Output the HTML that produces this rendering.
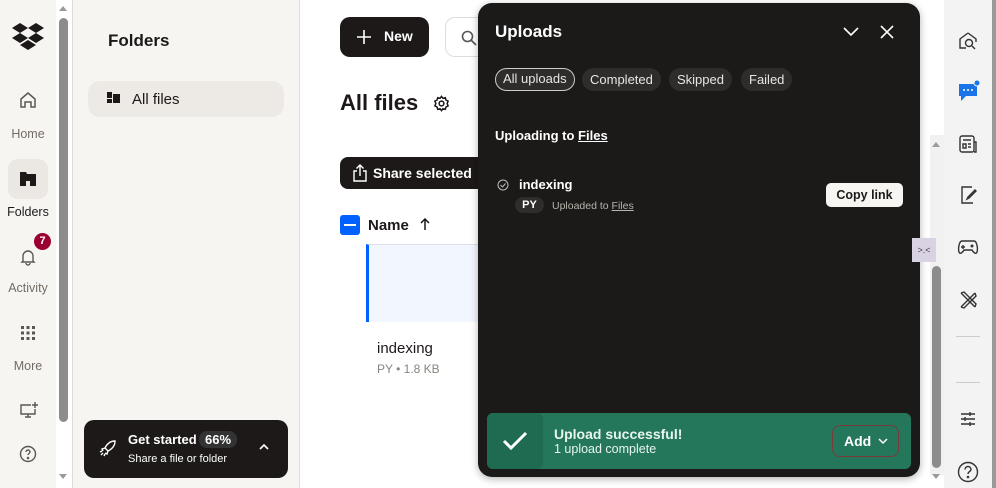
<!DOCTYPE html>
<html><head><meta charset="utf-8"><style>
*{box-sizing:border-box;margin:0;padding:0}
body{width:996px;height:488px;overflow:hidden;background:#fff;font-family:"Liberation Sans",sans-serif;position:relative;color:#1e1919}
.abs{position:absolute}
.rail{left:0;top:0;width:56px;height:488px;background:#f7f5f2}
.rl{font-size:12.5px;color:#736c64;width:56px;text-align:center}
.side{left:72px;top:0;width:228px;height:488px;background:#f7f5f2;border-left:1px solid #e0ddd8;border-right:1px solid #e0ddd8}
.pill{border-radius:12px;background:#2e2d2c;color:#e8e6e3;font-size:13px;height:23px;line-height:23px;padding:0 8px;top:68px}
</style></head><body>
<div class="abs rail"></div>
<svg class="abs" style="left:12px;top:23px" width="32" height="28" viewBox="0 0 32 28"><path d="M8 0L0 5l8 5 8-5zM24 0l-8 5 8 5 8-5zM0 15l8 5 8-5-8-5zM24 10l-8 5 8 5 8-5zM8 22l8 5 8-5-8-5z" fill="#1e1919"/></svg>
<svg class="abs" style="left:19px;top:91px" width="18" height="18" viewBox="0 0 18 18" fill="none" stroke="#5c5650" stroke-width="1.5"><path d="M2 8L9 2l7 6v8h-4v-5H6v5H2z"/></svg>
<div class="abs rl" style="top:127px">Home</div>
<div class="abs" style="left:8px;top:159px;width:40px;height:40px;border-radius:10px;background:#ebe8e3"></div>
<svg class="abs" style="left:19px;top:171px" width="18" height="16" viewBox="0 0 18 16"><path d="M1 1h6l1 2h9v12H1z" fill="#1e1919"/><rect x="7" y="10" width="4" height="5" fill="#ebe8e3"/></svg>
<div class="abs rl" style="top:205px;color:#1e1919">Folders</div>
<svg class="abs" style="left:19px;top:248px" width="18" height="18" viewBox="0 0 18 18" fill="none" stroke="#5c5650" stroke-width="1.4"><path d="M4 13V8a5 5 0 0110 0v5l1 1H3zM7 15a2 2 0 004 0"/></svg>
<div class="abs" style="left:34px;top:233px;width:17px;height:17px;border-radius:50%;background:#9b0032;color:#fff;font-size:11px;font-weight:bold;text-align:center;line-height:17px">7</div>
<div class="abs rl" style="top:281px">Activity</div>
<svg class="abs" style="left:20px;top:325px" width="16" height="16" viewBox="0 0 16 16" fill="#5c5650"><rect x="1" y="1" width="3" height="3"/><rect x="6.5" y="1" width="3" height="3"/><rect x="12" y="1" width="3" height="3"/><rect x="1" y="6.5" width="3" height="3"/><rect x="6.5" y="6.5" width="3" height="3"/><rect x="12" y="6.5" width="3" height="3"/><rect x="1" y="12" width="3" height="3"/><rect x="6.5" y="12" width="3" height="3"/><rect x="12" y="12" width="3" height="3"/></svg>
<div class="abs rl" style="top:359px">More</div>
<svg class="abs" style="left:19px;top:402px" width="20" height="18" viewBox="0 0 20 18" fill="none" stroke="#5c5650" stroke-width="1.4"><path d="M12 3H2v9h14V7M9 12v3M6 15h6M16 0v6M13 3h6"/></svg>
<svg class="abs" style="left:19px;top:445px" width="18" height="18" viewBox="0 0 18 18" fill="none" stroke="#5c5650" stroke-width="1.4"><circle cx="9" cy="9" r="7.5"/><path d="M7 7a2 2 0 114 0c0 1.5-2 1.5-2 3"/><circle cx="9" cy="13" r=".6" fill="#5c5650"/></svg>
<div class="abs" style="left:56px;top:0;width:15px;height:488px;background:#fff"></div>
<div class="abs" style="left:59px;top:18px;width:9px;height:404px;border-radius:5px;background:#8c8c8c"></div>
<div class="abs" style="left:59px;top:6px;width:0;height:0;border:4px solid transparent;border-bottom:5px solid #9a9a9a;border-top:0"></div>
<div class="abs" style="left:59px;top:474px;width:0;height:0;border:4px solid transparent;border-top:5px solid #9a9a9a;border-bottom:0"></div>
<div class="abs side"></div>
<div class="abs" style="left:108px;top:31px;font-size:17px;font-weight:bold">Folders</div>
<div class="abs" style="left:88px;top:81px;width:196px;height:36px;border-radius:12px;background:#edeae5"></div>
<svg class="abs" style="left:107px;top:92px" width="14" height="12" viewBox="0 0 14 12" fill="#1e1919"><rect x="0" y="0" width="5" height="6"/><rect x="0" y="7" width="5" height="4"/><rect x="6" y="2" width="7" height="9"/></svg>
<div class="abs" style="left:132px;top:91px;font-size:15px">All files</div>
<div class="abs" style="left:84px;top:420px;width:204px;height:58px;border-radius:10px;background:#1e1919"></div>
<svg class="abs" style="left:98px;top:438px" width="20" height="20" viewBox="0 0 20 20" fill="none" stroke="#fff" stroke-width="1.4"><path d="M17 3c-5 0-8 3-10 7l3 3c4-2 7-5 7-10zM7 10l-3 1 1 2M10 13l-1 3-2-1M5 15l-2 2M7 16l-1 2M4 13l-2 1"/></svg>
<div class="abs" style="left:128px;top:432px;font-size:13px;font-weight:bold;color:#fff">Get started</div>
<div class="abs" style="left:199px;top:431px;width:38px;height:17px;border-radius:8px;background:#333;color:#fff;font-size:13px;font-weight:bold;text-align:center;line-height:17px">66%</div>
<div class="abs" style="left:128px;top:453px;font-size:11px;color:#fff">Share a file or folder</div>
<svg class="abs" style="left:258px;top:443px" width="12" height="8" viewBox="0 0 12 8" fill="none" stroke="#fff" stroke-width="1.6"><path d="M2 6l4-4 4 4"/></svg>
<div class="abs" style="left:340px;top:17px;width:89px;height:40px;border-radius:10px;background:#1e1919"></div>
<svg class="abs" style="left:356px;top:29px" width="16" height="16" viewBox="0 0 16 16" stroke="#fff" stroke-width="1.6"><path d="M8 1v14M1 8h14"/></svg>
<div class="abs" style="left:384px;top:28px;font-size:14px;font-weight:bold;color:#fff">New</div>
<div class="abs" style="left:445px;top:17px;width:60px;height:40px;border-radius:10px;border:1px solid #ddd"></div>
<svg class="abs" style="left:461px;top:30px" width="16" height="16" viewBox="0 0 16 16" fill="none" stroke="#555" stroke-width="1.6"><circle cx="6.5" cy="6.5" r="5"/><path d="M10 10l5 5"/></svg>
<div class="abs" style="left:340px;top:90px;font-size:22px;font-weight:bold">All files</div>
<svg class="abs" style="left:433px;top:95px" width="17" height="17" viewBox="0 0 18 18" fill="none" stroke="#1e1919" stroke-width="1.6"><circle cx="9" cy="9" r="2.5"/><path d="M9 1.5l1.5 2 2.5-.7.7 2.5 2.3 1.2-1 2.5 1 2.5-2.3 1.2-.7 2.5-2.5-.7L9 16.5l-1.5-2-2.5.7-.7-2.5L2 11.5l1-2.5-1-2.5 2.3-1.2.7-2.5 2.5.7z"/></svg>
<div class="abs" style="left:340px;top:157px;width:150px;height:32px;border-radius:8px 0 0 8px;background:#1e1919"></div>
<svg class="abs" style="left:352px;top:164px" width="16" height="18" viewBox="0 0 16 18" fill="none" stroke="#fff" stroke-width="1.4"><path d="M5 7H2v10h12V7h-3M8 12V1M4.5 4.5L8 1l3.5 3.5"/></svg>
<div class="abs" style="left:373px;top:165px;font-size:14px;font-weight:bold;color:#fff">Share selected</div>
<div class="abs" style="left:340px;top:215px;width:20px;height:20px;border-radius:3px;background:#0061fe"></div>
<div class="abs" style="left:344px;top:224px;width:12px;height:2px;background:#fff"></div>
<div class="abs" style="left:368px;top:217px;font-size:15px;font-weight:bold">Name</div>
<svg class="abs" style="left:419px;top:218px" width="12" height="13" viewBox="0 0 12 13" fill="none" stroke="#1e1919" stroke-width="1.5"><path d="M6 12V1M2 5l4-4 4 4"/></svg>
<div class="abs" style="left:366px;top:244px;width:120px;height:78px;background:#f2f6fe;border-left:3px solid #0061fe;border-top:1px solid #dde"></div>
<div class="abs" style="left:377px;top:340px;font-size:15px">indexing</div>
<div class="abs" style="left:377px;top:362px;font-size:12px;color:#8a847d">PY • 1.8 KB</div>
<div class="abs" style="left:930px;top:135px;width:14px;height:340px;background:#f1f1f1"></div>
<div class="abs" style="left:932px;top:266px;width:9px;height:202px;border-radius:5px;background:#8c8c8c"></div>
<div class="abs" style="left:932px;top:142px;border:4px solid transparent;border-bottom:5px solid #9a9a9a;border-top:0"></div>
<div class="abs" style="left:932px;top:474px;border:4px solid transparent;border-top:5px solid #9a9a9a;border-bottom:0"></div>
<div class="abs" style="left:944px;top:0;width:48px;height:488px;background:#f3f3f3"></div>
<div class="abs" style="left:992px;top:0;width:4px;height:488px;background:#999"></div>
<svg class="abs" style="left:958px;top:31px" width="20" height="20" viewBox="0 0 20 20" fill="none" stroke="#333" stroke-width="1.4"><path d="M10 2L2 8v9h6M10 2l8 6v3"/><circle cx="11" cy="12" r="3.5"/><path d="M14 15l3 3"/></svg>
<svg class="abs" style="left:957px;top:79px" width="24" height="24" viewBox="0 0 24 24"><path d="M2 5h18v12H9l-5 5v-5H2z" fill="#1a73e8"/><circle cx="7" cy="11" r="1" fill="#fff"/><circle cx="11" cy="11" r="1" fill="#fff"/><circle cx="15" cy="11" r="1" fill="#fff"/><circle cx="20" cy="4" r="3" fill="#1a73e8" stroke="#f3f3f3"/></svg>
<svg class="abs" style="left:958px;top:134px" width="20" height="20" viewBox="0 0 20 20" fill="none" stroke="#333" stroke-width="1.4"><rect x="2" y="2" width="14" height="16" rx="2"/><path d="M16 8h2v10h-2M5 6h8M5 10h3v4H5zM10 10h3M10 13h3"/></svg>
<svg class="abs" style="left:958px;top:185px" width="20" height="20" viewBox="0 0 20 20" fill="none" stroke="#333" stroke-width="1.4"><path d="M14 2H4v16h11M18 6l-7 7-2 1 1-2 7-7z"/></svg>
<svg class="abs" style="left:957px;top:238px" width="22" height="18" viewBox="0 0 22 18" fill="none" stroke="#333" stroke-width="1.4"><path d="M5 3h12c3 0 4 8 3 11s-4 0-5-2H7c-1 2-4 5-5 2S2 3 5 3z M6 7v4M4 9h4"/><circle cx="15" cy="8" r=".8"/></svg>
<svg class="abs" style="left:958px;top:290px" width="20" height="20" viewBox="0 0 20 20" fill="none" stroke="#333" stroke-width="1.4"><path d="M3 3l14 14M17 3L3 17M3 3l3-1 12 12-1 3M17 3l1 3-12 12-3-1"/></svg>
<div class="abs" style="left:956px;top:336px;width:24px;height:1px;background:#ccc"></div>
<div class="abs" style="left:956px;top:382px;width:24px;height:1px;background:#ccc"></div>
<svg class="abs" style="left:959px;top:410px" width="18" height="18" viewBox="0 0 18 18" stroke="#333" stroke-width="1.4"><path d="M2 4h14M2 9h14M2 14h14M11 2v4M6 7v4M11 12v4"/></svg>
<svg class="abs" style="left:957px;top:461px" width="22" height="22" viewBox="0 0 22 22" fill="none" stroke="#333" stroke-width="1.4"><circle cx="11" cy="11" r="9.5"/><path d="M8 8.5a3 3 0 116 0c0 2-3 2-3 4.5"/><circle cx="11" cy="16" r=".6"/></svg>
<div class="abs" style="left:478px;top:3px;width:442px;height:474px;border-radius:14px;background:#1b1a19;box-shadow:0 2px 8px rgba(0,0,0,.3)"></div>
<div class="abs" style="left:912px;top:238px;width:24px;height:24px;background:#d9d2e3;font-size:9px;color:#444;text-align:center;line-height:24px">&gt;.&lt;</div>
<div class="abs" style="left:495px;top:22px;font-size:17px;font-weight:bold;color:#fff">Uploads</div>
<svg class="abs" style="left:843px;top:27px" width="16" height="10" viewBox="0 0 16 10" fill="none" stroke="#fff" stroke-width="1.6"><path d="M1 1l7 7 7-7"/></svg>
<svg class="abs" style="left:880px;top:25px" width="14" height="14" viewBox="0 0 14 14" stroke="#fff" stroke-width="1.6"><path d="M1 1l12 12M13 1L1 13"/></svg>
<div class="abs pill" style="left:495px;border:1.5px solid #ccc;line-height:20px;padding:0 7px">All uploads</div>
<div class="abs pill" style="left:582px">Completed</div>
<div class="abs pill" style="left:669px">Skipped</div>
<div class="abs pill" style="left:741px">Failed</div>
<div class="abs" style="left:495px;top:128px;font-size:13px;font-weight:bold;color:#fff">Uploading to <u>Files</u></div>
<svg class="abs" style="left:497px;top:179px" width="12" height="12" viewBox="0 0 12 12" fill="none" stroke="#bbb" stroke-width="1"><circle cx="6" cy="6" r="5"/><path d="M3.5 6l2 2 3-3.5"/></svg>
<div class="abs" style="left:519px;top:177px;font-size:13px;font-weight:bold;color:#fff">indexing</div>
<div class="abs" style="left:515px;top:197px;width:29px;height:16px;border-radius:8px;background:#2e2d2c;color:#fff;font-size:11px;font-weight:bold;text-align:center;line-height:16px">PY</div>
<div class="abs" style="left:552px;top:200px;font-size:10.5px;color:#b8b3ad">Uploaded to <u>Files</u></div>
<div class="abs" style="left:826px;top:183px;width:77px;height:24px;border-radius:5px;background:#f7f5f2;font-size:12.5px;font-weight:bold;text-align:center;line-height:24px">Copy link</div>
<div class="abs" style="left:487px;top:413px;width:424px;height:56px;border-radius:6px;background:#25775b"></div>
<div class="abs" style="left:487px;top:413px;width:56px;height:56px;border-radius:6px;background:#1f6b51"></div>
<svg class="abs" style="left:502px;top:430px" width="26" height="22" viewBox="0 0 26 22" fill="none" stroke="#fff" stroke-width="3"><path d="M2 11l7 7L24 3"/></svg>
<div class="abs" style="left:554px;top:426px;font-size:14px;font-weight:bold;color:#e8f5ee">Upload successful!</div>
<div class="abs" style="left:554px;top:442px;font-size:12.5px;color:#e8f5ee">1 upload complete</div>
<div class="abs" style="left:832px;top:425px;width:67px;height:32px;border-radius:8px;border:1px solid #7a3a3a"></div>
<div class="abs" style="left:844px;top:433px;font-size:14px;font-weight:bold;color:#fff">Add</div>
<svg class="abs" style="left:878px;top:438px" width="10" height="7" viewBox="0 0 10 7" fill="none" stroke="#fff" stroke-width="1.5"><path d="M1 1l4 4 4-4"/></svg>
</body></html>
